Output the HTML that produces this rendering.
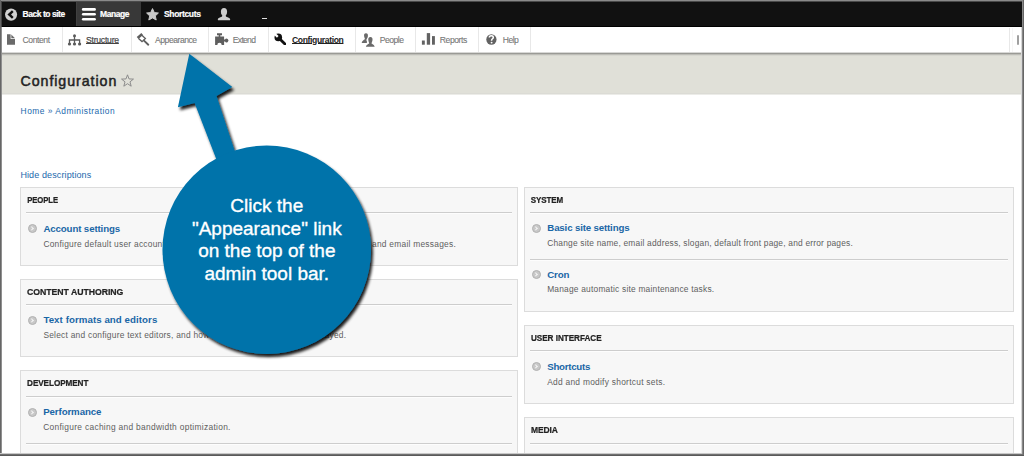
<!DOCTYPE html>
<html><head><meta charset="utf-8">
<style>
*{margin:0;padding:0;box-sizing:border-box}
html,body{width:1024px;height:456px;overflow:hidden;background:#fff;font-family:"Liberation Sans",sans-serif}
#frame{position:absolute;left:0;top:0;width:1024px;height:456px;overflow:hidden;background:#fff}
.abs{position:absolute;white-space:nowrap}
.t{position:absolute;white-space:nowrap}
#bar{position:absolute;left:0;top:0;width:1024px;height:27px;background:#111;border-bottom:1px solid #000}
#manage{position:absolute;left:76px;top:2px;width:65px;height:24px;background:#383838;border-left:1px solid #404040}
#tray{position:absolute;left:0;top:27px;width:1024px;height:25px;background:#fff}
#shadow{position:absolute;left:0;top:52px;width:1024px;height:4px;background:linear-gradient(#d8d8d6 0,#d8d8d6 25%,#9a9a95 25%,#9a9a95 50%,#bdbdb7 50%,#bdbdb7 75%,#d6d6cf 75%)}
.div{position:absolute;top:27px;width:1px;height:25px;background:#e8e8e8}
#head{position:absolute;left:0;top:56px;width:1024px;height:39px;background:linear-gradient(#e0e0d8 0,#e0e0d8 94.8%,#dbdbd5 94.8%,#dbdbd5 97.4%,#ececE8 97.4%)}
.panel{position:absolute;background:#f7f7f7;border:1px solid #dcdcdc}
.sep{position:absolute;height:1px;background:#cdcdcd;box-shadow:0 1px 0 #fdfdfd}
.ar{position:absolute;width:9px;height:9px;border-radius:50%;background:#c8c8c8;border:1.2px solid #b2b2b2}
.ar:after{content:"";position:absolute;left:1.2px;top:1.7px;width:2.4px;height:2.4px;border-right:1.2px solid #f4f4f4;border-top:1.2px solid #f4f4f4;transform:rotate(45deg)}
</style></head><body><div id="frame">

<!-- toolbar -->
<div id="bar"></div>
<div id="manage"></div>
<svg class="abs" style="left:0;top:0" width="30" height="27" viewBox="0 0 30 27"><circle cx="11.05" cy="14.6" r="6.05" fill="#d2d2d2"/><path d="M12.8 11.2 L9.2 14.5 L12.8 17.8" stroke="#111" stroke-width="2.4" fill="none" stroke-linejoin="miter"/></svg>
<svg class="abs" style="left:0;top:0" width="100" height="27" viewBox="0 0 100 27"><g stroke="#fff" stroke-width="2.6" stroke-linecap="round"><path d="M83.2 9.4 H94.6"/><path d="M83.2 14.3 H94.6"/><path d="M83.2 19.3 H94.6"/></g></svg>
<svg class="abs" style="left:0;top:0" width="170" height="27" viewBox="0 0 170 27"><path d="M152.5 8.6 L154.3 12.6 L158.4 13 L155.3 15.9 L156.2 20 L152.5 17.9 L148.8 20 L149.7 15.9 L146.6 13 L150.7 12.6 Z" fill="#c9c9c9" stroke="#c9c9c9" stroke-width="1" stroke-linejoin="round"/></svg>
<svg class="abs" style="left:0;top:0" width="240" height="27" viewBox="0 0 240 27"><g fill="#cdcdcd"><ellipse cx="224" cy="11.8" rx="3.1" ry="3.9"/><path d="M222.2 14.5 C222.4 16 222.2 16.6 221 17.1 C219.4 17.7 218 18.3 217.8 19.4 C217.8 20 218.3 20.2 219 20.2 H229 C229.7 20.2 230.2 20 230.2 19.4 C230 18.3 228.6 17.7 227 17.1 C225.8 16.6 225.6 16 225.8 14.5 Z"/></g></svg>
<div class="abs" style="left:262px;top:17.6px;width:5px;height:1.3px;background:#e0e0e0"></div>

<!-- tray -->
<div id="tray"></div>
<div id="shadow"></div>
<div class="div" style="left:62px"></div>
<div class="div" style="left:131px"></div>
<div class="div" style="left:208px"></div>
<div class="div" style="left:268px"></div>
<div class="div" style="left:355px"></div>
<div class="div" style="left:415px"></div>
<div class="div" style="left:478px"></div>
<div class="div" style="left:530px"></div>

<svg class="abs" style="left:0;top:0" width="540" height="56" viewBox="0 0 540 56">
<g fill="#6a6a6a">
<path d="M7 34.2 H10.6 V38.9 H15 V44.7 H7 Z"/>
<path d="M11.3 34.4 L15 38.2 H11.3 Z"/>
</g>
<g fill="#5a5a5a" stroke="#5a5a5a">
<circle cx="74.5" cy="35.8" r="1.5" stroke="none"/>
<path d="M74.5 36 V44" stroke-width="1.3" fill="none"/>
<path d="M69.5 44 V40 H79.6 V44" stroke-width="1.3" fill="none"/>
<circle cx="69.5" cy="44" r="1.6" stroke="none"/>
<circle cx="74.5" cy="44" r="1.6" stroke="none"/>
<circle cx="79.6" cy="44" r="1.6" stroke="none"/>
</g>
<g stroke="#5e5e5e" fill="none">
<path d="M137.6 38.1 L142.2 34.1" stroke-width="2.6"/>
<path d="M138.5 38.5 L142 41.6 L145.4 38.4 L141.9 35.2" stroke-width="1.3"/>
<path d="M144 40.6 L148.3 44.7" stroke-width="1.9" stroke-linecap="round"/>
</g>
<g fill="#5e5e5e">
<path d="M217 33.3 H222 V35.3 H220.3 V36.6 H224.1 V39.6 H225 A1.8 1.8 0 1 1 225 41.4 H224.1 V44.9 H221.7 A2.2 2.2 0 0 0 217.3 44.9 H215.1 V36.6 H218.7 V35.3 H217 Z"/>
</g>
<mask id="wm"><rect x="260" y="28" width="40" height="24" fill="#fff"/><rect x="-1.15" y="-6" width="2.3" height="5.2" fill="#000" transform="translate(278.3 37.4) rotate(-45)"/></mask>
<g mask="url(#wm)" fill="#111" stroke="#111">
<circle cx="278.3" cy="37.4" r="3.8" stroke="none"/>
<path d="M278.6 37.8 L285.2 44.3" stroke-width="2.8" stroke-linecap="round" fill="none"/>
</g>
<g fill="#6a6a6a">
<path d="M366 33.3 C364.4 33.3 363.9 34.6 364.1 36 C364.3 37.4 364.8 38.2 364.9 38.9 C364.8 39.7 362.2 40 361.7 43 H366.9 V41.2 C366.3 40.6 366.4 39.6 366.6 39.2 C367.3 38.3 367.8 37.4 367.9 36 C368.1 34.6 367.6 33.3 366 33.3 Z"/>
<path d="M370.4 37 C368.6 37 368.1 38.4 368.3 40 C368.5 41.6 369.1 42.6 369.2 43.3 C369.1 44.1 366.4 44.4 365.9 46.7 H374.7 C374.2 44.4 371.6 44.1 371.5 43.3 C371.7 42.6 372.3 41.6 372.5 40 C372.7 38.4 372.2 37 370.4 37 Z"/>
</g>
<g fill="#626262">
<rect x="421.9" y="40.5" width="2.9" height="4.2"/>
<rect x="426.8" y="33.1" width="3.3" height="11.6"/>
<rect x="432" y="36.1" width="2.9" height="8.6"/>
</g>
<circle cx="491.4" cy="39.5" r="5.15" fill="#626262"/>
<path d="M489.3 37.6 C489.3 36.4 490.2 35.7 491.3 35.7 C492.5 35.7 493.3 36.4 493.3 37.4 C493.3 38.7 491.6 38.8 491.6 40.3 V40.8" fill="none" stroke="#fff" stroke-width="1.5"/>
<circle cx="491.6" cy="42.6" r="0.95" fill="#fff"/>
</svg>

<div class="abs" style="left:1009px;top:28px;width:13px;height:24px;border-left:1px solid #e8e8e8;background:linear-gradient(90deg,#fff 0,#fff 20%,#f6f6f6 20%,#f6f6f6 28%,#fff 28%)"></div>
<div class="abs" style="left:1016.8px;top:35px;width:2.2px;height:10.4px;background:#a0a0a0;border-radius:1px"></div>

<!-- header -->
<div id="head"></div>
<svg class="abs" style="left:121px;top:74px" width="13" height="13" viewBox="0 0 24 23"><path d="M12 1 L14.8 8.6 L23 8.9 L16.6 14 L18.8 22 L12 17.4 L5.2 22 L7.4 14 L1 8.9 L9.2 8.6 Z" fill="none" stroke="#8a8a8a" stroke-width="1.8"/></svg>


<!-- left column -->
<div class="panel" style="left:20px;top:187px;width:498px;height:79px"></div>
<div class="sep" style="left:26px;top:212px;width:486px"></div>
<div class="ar" style="left:28px;top:224px"></div>

<div class="panel" style="left:20px;top:279px;width:498px;height:78px"></div>
<div class="sep" style="left:26px;top:304px;width:486px"></div>
<div class="ar" style="left:28px;top:316px"></div>

<div class="panel" style="left:20px;top:370px;width:498px;height:100px"></div>
<div class="sep" style="left:26px;top:396px;width:486px"></div>
<div class="ar" style="left:28px;top:408px"></div>
<div class="sep" style="left:26px;top:443px;width:486px"></div>

<!-- right column -->
<div class="panel" style="left:524px;top:187px;width:490px;height:125px"></div>
<div class="sep" style="left:530px;top:212px;width:478px"></div>
<div class="ar" style="left:532px;top:224px"></div>
<div class="sep" style="left:530px;top:259px;width:478px"></div>
<div class="ar" style="left:532px;top:270px"></div>

<div class="panel" style="left:524px;top:325px;width:490px;height:79px"></div>
<div class="sep" style="left:530px;top:350px;width:478px"></div>
<div class="ar" style="left:532px;top:362px"></div>

<div class="panel" style="left:524px;top:417px;width:490px;height:60px"></div>
<div class="sep" style="left:530px;top:443px;width:478px"></div>

<div class="t" style="left:22.60px;top:10.00px;font-size:8.5px;line-height:8.5px;font-weight:bold;letter-spacing:-0.473px;color:#fff;-webkit-text-stroke:0.2px #fff">Back to site</div>
<div class="t" style="left:100.00px;top:10.00px;font-size:8.5px;line-height:8.5px;font-weight:bold;letter-spacing:-0.44px;color:#fff;-webkit-text-stroke:0.2px #fff">Manage</div>
<div class="t" style="left:164.00px;top:10.00px;font-size:8.5px;line-height:8.5px;font-weight:bold;letter-spacing:-0.35px;color:#fff;-webkit-text-stroke:0.2px #fff">Shortcuts</div>
<div class="t" style="left:22.60px;top:36.42px;font-size:8.6px;line-height:8.6px;font-weight:normal;letter-spacing:-0.433px;color:#777;-webkit-text-stroke:0.1px #777">Content</div>
<div class="t" style="left:86.00px;top:36.02px;font-size:8.6px;line-height:8.6px;font-weight:normal;letter-spacing:-0.225px;color:#444;text-decoration:underline;text-underline-offset:0.2px;-webkit-text-stroke:0.2px #444">Structure</div>
<div class="t" style="left:155.00px;top:36.42px;font-size:8.6px;line-height:8.6px;font-weight:normal;letter-spacing:-0.467px;color:#777;-webkit-text-stroke:0.1px #777">Appearance</div>
<div class="t" style="left:232.80px;top:36.42px;font-size:8.6px;line-height:8.6px;font-weight:normal;letter-spacing:-0.72px;color:#777;-webkit-text-stroke:0.1px #777">Extend</div>
<div class="t" style="left:292.00px;top:36.02px;font-size:8.6px;line-height:8.6px;font-weight:bold;letter-spacing:-0.375px;color:#222;text-decoration:underline;text-underline-offset:0.2px">Configuration</div>
<div class="t" style="left:379.80px;top:36.42px;font-size:8.6px;line-height:8.6px;font-weight:normal;letter-spacing:-0.52px;color:#777;-webkit-text-stroke:0.1px #777">People</div>
<div class="t" style="left:439.80px;top:36.42px;font-size:8.6px;line-height:8.6px;font-weight:normal;letter-spacing:-0.433px;color:#777;-webkit-text-stroke:0.1px #777">Reports</div>
<div class="t" style="left:502.80px;top:36.42px;font-size:8.6px;line-height:8.6px;font-weight:normal;letter-spacing:-0.533px;color:#777;-webkit-text-stroke:0.1px #777">Help</div>
<div class="t" style="left:20.50px;top:73.68px;font-size:14.2px;line-height:14.2px;font-weight:normal;letter-spacing:0.95px;color:#232323;-webkit-text-stroke:0.5px #232323">Configuration</div>
<div class="t" style="left:20.60px;top:106.89px;font-size:8.4px;line-height:8.4px;font-weight:normal;letter-spacing:0.49px;color:#2268ad;">Home » Administration</div>
<div class="t" style="left:20.40px;top:171.48px;font-size:9.0px;line-height:9.0px;font-weight:normal;letter-spacing:0.113px;color:#2268ad;">Hide descriptions</div>
<div class="t" style="left:27.20px;top:197.05px;font-size:7.74px;line-height:7.74px;font-weight:bold;letter-spacing:-0.08px;color:#222;transform:scaleY(1.183);transform-origin:0 6.55px;-webkit-text-stroke:0.2px #222">PEOPLE</div>
<div class="t" style="left:43.40px;top:223.59px;font-size:9.7px;line-height:9.7px;font-weight:bold;letter-spacing:-0.12px;color:#1a66a6;">Account settings</div>
<div class="t" style="left:43.40px;top:239.59px;font-size:8.4px;line-height:8.4px;font-weight:normal;letter-spacing:0.254px;color:#5e5e5e;">Configure default user account settings, including fields, registration requirements, and email messages.</div>
<div class="t" style="left:27.00px;top:287.74px;font-size:8.7px;line-height:8.7px;font-weight:bold;letter-spacing:-0.025px;color:#222;transform:scaleY(1.053);transform-origin:0 7.36px;-webkit-text-stroke:0.2px #222">CONTENT AUTHORING</div>
<div class="t" style="left:43.40px;top:314.99px;font-size:9.7px;line-height:9.7px;font-weight:bold;letter-spacing:0.07px;color:#1a66a6;">Text formats and editors</div>
<div class="t" style="left:43.40px;top:330.99px;font-size:8.4px;line-height:8.4px;font-weight:normal;letter-spacing:0.242px;color:#5e5e5e;">Select and configure text editors, and how content is filtered when displayed.</div>
<div class="t" style="left:27.10px;top:379.78px;font-size:8.17px;line-height:8.17px;font-weight:bold;letter-spacing:-0.08px;color:#222;transform:scaleY(1.121);transform-origin:0 6.92px;-webkit-text-stroke:0.2px #222">DEVELOPMENT</div>
<div class="t" style="left:43.20px;top:406.79px;font-size:9.7px;line-height:9.7px;font-weight:bold;letter-spacing:-0.1px;color:#1a66a6;">Performance</div>
<div class="t" style="left:43.20px;top:423.49px;font-size:8.4px;line-height:8.4px;font-weight:normal;letter-spacing:0.309px;color:#5e5e5e;">Configure caching and bandwidth optimization.</div>
<div class="t" style="left:530.70px;top:196.93px;font-size:8.0px;line-height:8.0px;font-weight:bold;letter-spacing:-0.08px;color:#222;transform:scaleY(1.145);transform-origin:0 6.77px;-webkit-text-stroke:0.2px #222">SYSTEM</div>
<div class="t" style="left:547.30px;top:222.89px;font-size:9.7px;line-height:9.7px;font-weight:bold;letter-spacing:-0.156px;color:#1a66a6;">Basic site settings</div>
<div class="t" style="left:547.20px;top:238.89px;font-size:8.4px;line-height:8.4px;font-weight:normal;letter-spacing:0.205px;color:#5e5e5e;">Change site name, email address, slogan, default front page, and error pages.</div>
<div class="t" style="left:547.20px;top:269.89px;font-size:9.7px;line-height:9.7px;font-weight:bold;letter-spacing:-0.133px;color:#1a66a6;">Cron</div>
<div class="t" style="left:547.20px;top:285.49px;font-size:8.4px;line-height:8.4px;font-weight:normal;letter-spacing:0.21px;color:#5e5e5e;">Manage automatic site maintenance tasks.</div>
<div class="t" style="left:530.90px;top:335.11px;font-size:8.14px;line-height:8.14px;font-weight:bold;letter-spacing:-0.015px;color:#222;transform:scaleY(1.125);transform-origin:0 6.89px;-webkit-text-stroke:0.2px #222">USER INTERFACE</div>
<div class="t" style="left:547.20px;top:361.79px;font-size:9.7px;line-height:9.7px;font-weight:bold;letter-spacing:-0.25px;color:#1a66a6;">Shortcuts</div>
<div class="t" style="left:547.20px;top:378.29px;font-size:8.4px;line-height:8.4px;font-weight:normal;letter-spacing:0.271px;color:#5e5e5e;">Add and modify shortcut sets.</div>
<div class="t" style="left:531.00px;top:426.30px;font-size:8.5px;line-height:8.5px;font-weight:bold;letter-spacing:-0.1px;color:#222;transform:scaleY(1.077);transform-origin:0 7.20px;-webkit-text-stroke:0.2px #222">MEDIA</div>
<!-- callout -->
<svg class="abs" style="left:0;top:0" width="1024" height="456" viewBox="0 0 1024 456">
<defs><filter id="sh" x="-20%" y="-20%" width="140%" height="140%"><feGaussianBlur in="SourceAlpha" stdDeviation="1.7"/><feOffset dx="2.4" dy="2.6"/><feComponentTransfer><feFuncA type="linear" slope="0.9"/></feComponentTransfer><feMerge><feMergeNode/><feMergeNode in="SourceGraphic"/></feMerge></filter></defs>
<g filter="url(#sh)" fill="#0073aa">
<path d="M189.3 53.8 L232.3 87.1 L216.5 95.9 L237.7 160 L218.6 165 L194.6 102.9 L177.9 107.3 Z"/>
<circle cx="266.75" cy="249.75" r="104.25"/>
</g>
</svg>
<div class="abs" style="left:161.8px;top:195.2px;width:210px;text-align:center;color:#fff;font-size:19px;line-height:22.6px;-webkit-text-stroke:0.35px #fff;white-space:normal">Click the<br>"Appearance" link<br>on the top of the<br>admin tool bar.</div>

<!-- frame border -->
<div class="abs" style="left:0;top:0;width:1024px;height:1px;background:#8a8a8a"></div>
<div class="abs" style="left:0;top:1px;width:1024px;height:1px;background:#4a4a4a"></div>
<div class="abs" style="left:0;top:0;width:1px;height:456px;background:#666"></div>
<div class="abs" style="left:1px;top:27px;width:1px;height:427px;background:#8f8f8f"></div>
<div class="abs" style="left:1px;top:1px;width:1px;height:26px;background:#444"></div>
<div class="abs" style="left:1021px;top:27px;width:1px;height:427px;background:#d8d8d8"></div>
<div class="abs" style="left:1022px;top:0;width:1px;height:456px;background:#888"></div>
<div class="abs" style="left:1023px;top:0;width:1px;height:456px;background:#666"></div>
<div class="abs" style="left:0;top:453px;width:1022px;height:1px;background:#c8c8c8"></div>
<div class="abs" style="left:0;top:454px;width:1024px;height:1px;background:#707070"></div>
<div class="abs" style="left:0;top:455px;width:1024px;height:1px;background:#5a5a5a"></div>
</div></body></html>
